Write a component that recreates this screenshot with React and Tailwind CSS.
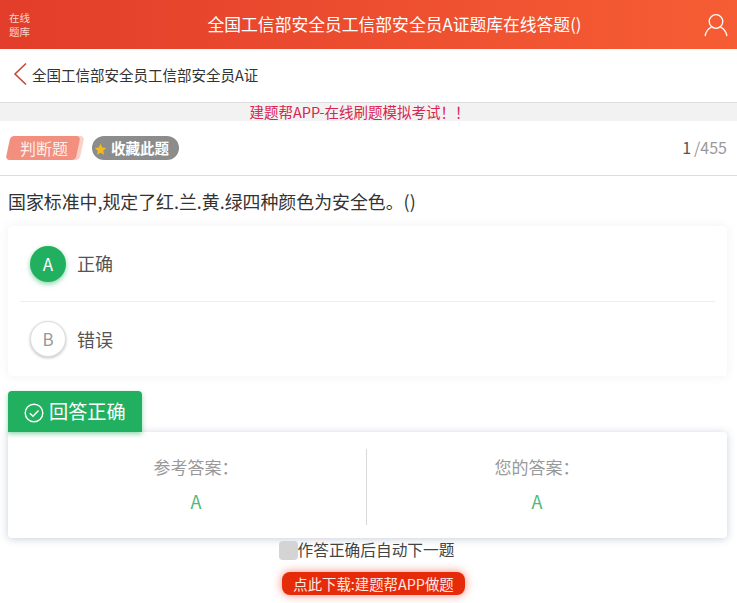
import React from 'react';

const font = { fontFamily: '"Noto Sans CJK SC", "Noto Sans", sans-serif' };

function AnswerCol({ label, value, border }) {
  return (
    <div className={`flex-1 h-[76px] flex flex-col items-center ${border ? 'border-l border-[#d8d8d8]' : ''}`}>
      <div className="text-[17px] leading-[24px] text-[#999] mt-[6px]">{label}</div>
      <div className="text-[18px] leading-[24px] text-[#4fb878] mt-[10px]">{value}</div>
    </div>
  );
}

export default function App() {
  return (
    <div style={font} className="w-[737px] h-[603px] overflow-hidden bg-white text-[#333]">
      <header className="h-[49px] flex items-center bg-gradient-to-r from-[#e23d2a] to-[#f65d34] text-white">
        <div className="w-[50px] pl-[9px] text-[10.5px] leading-[14px] text-[#fbd5cc]">
          在线<br />题库
        </div>
        <div className="flex-1 text-center text-[16.8px] pl-[52px]">全国工信部安全员工信部安全员A证题库在线答题()</div>
        <div className="w-[50px] flex justify-center pl-[8px]">
          <svg width="24" height="24" viewBox="0 0 24 24" fill="none" stroke="#fff" strokeWidth="1.3" strokeLinecap="round">
            <circle cx="12" cy="8.5" r="6.8" />
            <path d="M7.5 14 C4.5 15.5 2 18.5 1.2 22.5 M16.5 14 C19.5 15.5 22 18.5 22.8 22.5" />
          </svg>
        </div>
      </header>

      <div className="h-[54px] flex items-center border-b border-[#ddd]">
        <svg className="ml-[13px] mt-[-3px]" width="14" height="24" viewBox="0 0 14 24" fill="none" stroke="#c8473a" strokeWidth="1.6">
          <path d="M13 1.5 L2 12 L13 22.5" />
        </svg>
        <span className="ml-[5px] text-[14.5px] text-[#333] mt-[-2px]">全国工信部安全员工信部安全员A证</span>
      </div>

      <div className="h-[18px] bg-[#f2f2f2] text-center text-[14.5px] leading-[18px] text-[#d9254f] pr-[18px]">
        建题帮APP-在线刷题模拟考试！！
      </div>

      <div className="h-[55px] flex items-center border-b border-[#ddd] pl-[8px] pr-[10px]">
        <div className="relative w-[72px] h-[24px]">
          <div className="absolute left-[4px] top-0 w-[70px] h-[24px] bg-[#fbd0c8] rounded-[4px] -skew-x-12" />
          <div className="absolute left-0 top-0 w-[70px] h-[24px] bg-[#f28f7e] rounded-[4px] -skew-x-12" />
          <div className="absolute inset-0 flex items-center justify-center text-[16px] text-[#fdeeea]">判断题</div>
        </div>
        <div className="ml-[12px] w-[87px] h-[24px] rounded-[12px] bg-[#8c8c8c] flex items-center pl-[1px] text-white font-bold text-[14.5px]">
          <svg width="13" height="13" viewBox="0 0 24 24" className="ml-[1px] mt-[2px] mr-[4px]">
            <path fill="#f5b919" d="M12 1.5l3.2 6.9 7.3.9-5.4 5.1 1.4 7.4L12 18.2l-6.5 3.6 1.4-7.4L1.5 9.3l7.3-.9z" />
          </svg>
          收藏此题
        </div>
        <div className="ml-auto text-[16px] text-[#999] mt-[-2px]">
          <span className="text-[#555] mr-[3px]">1</span>/455
        </div>
      </div>

      <div className="h-[50px] pl-[8px] flex items-center text-[17.9px] text-[#333]">
        国家标准中,规定了红.兰.黄.绿四种颜色为安全色。()
      </div>

      <div className="mx-[8px] w-[719px] h-[150px] bg-white rounded-[4px] shadow-[0_0_10px_rgba(90,110,170,0.1)] px-[12px]">
        <div className="h-[76px] flex items-center border-b border-[#eee] pl-[10px]">
          <div className="w-[36px] h-[36px] rounded-full bg-[#20b05f] text-white text-[17px] flex items-center justify-center shadow-[0_2px_5px_rgba(32,176,95,0.55)]">A</div>
          <span className="ml-[11px] text-[18px] text-[#555]">正确</span>
        </div>
        <div className="h-[74px] flex items-center pl-[10px]">
          <div className="w-[36px] h-[36px] rounded-full border border-[#ddd] bg-white text-[#999] text-[17px] flex items-center justify-center shadow-[0_1px_3px_rgba(0,0,0,0.25)]">B</div>
          <span className="ml-[11px] text-[18px] text-[#555]">错误</span>
        </div>
      </div>

      <div className="relative z-10 mt-[15px] ml-[8px] w-[134px] h-[41px] rounded-t-[4px] bg-[#20b05f] text-white flex items-center pl-[16px] text-[19.2px] shadow-[0_2px_5px_rgba(32,176,95,0.5)]">
        <svg width="20" height="20" viewBox="0 0 20 20" fill="none" stroke="#fff" strokeWidth="1.4" className="mr-[5px] mt-[2px]">
          <circle cx="10" cy="10" r="8.8" />
          <path d="M5.8 10.2 L9 13.2 L14.5 7.4" />
        </svg>
        回答正确
      </div>

      <div className="mx-[8px] w-[719px] h-[106px] bg-white rounded-[4px] shadow-[0_1px_8px_rgba(80,95,140,0.3)] flex items-center pl-[18px] pr-[20px] pt-[4px]">
        <AnswerCol label="参考答案：" value="A" />
        <AnswerCol label="您的答案：" value="A" border />
      </div>

      <div className="h-[24px] flex items-center justify-center text-[15.7px] text-[#444] pr-[4px]">
        <span className="w-[19px] h-[19px] rounded-[4px] bg-[#d4d4d4]" />
        作答正确后自动下一题
      </div>

      <div className="flex justify-center mt-[10px] pl-[10px]">
        <div className="w-[183px] h-[23px] rounded-[8px] bg-[#e62b0a] text-[#ffe9e2] text-[14.4px] flex items-center justify-center shadow-[0_0_10px_rgba(230,43,10,0.55)]">
          点此下载:建题帮APP做题
        </div>
      </div>
    </div>
  );
}
